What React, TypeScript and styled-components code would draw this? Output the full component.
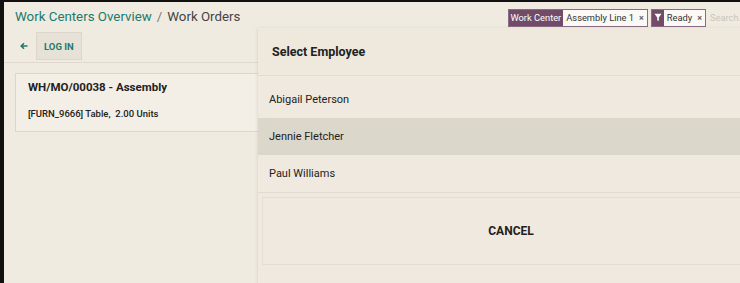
import React from "react";
import styled, { createGlobalStyle } from "styled-components";

const Global = createGlobalStyle`
  html, body { margin: 0; padding: 0; background: #111; }
  body { font-family: Roboto, "Liberation Sans", Arial, sans-serif; }
  * { box-sizing: border-box; }
`;

const Screen = styled.div`
  position: relative;
  width: 740px;
  height: 283px;
  overflow: hidden;
  background: #111;
  padding: 2px 0 0 4px;
`;

const Page = styled.div`
  position: relative;
  height: 100%;
  background: #f0ebe1;
  display: flex;
  flex-direction: column;
`;

const ControlPanel = styled.div`
  border-bottom: 1px solid #e0dace;
  height: 61px;
  display: flex;
  flex-direction: column;
`;

const TopRow = styled.div`
  display: flex;
  align-items: center;
  justify-content: space-between;
  height: 29px;
  padding: 0 0 0 11px;
`;

const Breadcrumb = styled.div`
  font-size: 13.3px;
  color: #444;
`;

const Crumb = styled.span`
  color: #217a6b;
`;

const Sep = styled.span`
  color: #777;
  margin: 0 5px;
`;

const SearchBar = styled.div`
  display: flex;
  align-items: center;
  gap: 3px;
  font-size: 9.3px;
  height: 18px;
  margin-top: 2px;
`;

const Facet = styled.div`
  display: flex;
  align-items: stretch;
  height: 18px;
  border: 1px solid #8a6d83;
  background: #fbf9f5;
`;

const FacetLabel = styled.span<{ $icon?: boolean }>`
  background: #714b67;
  color: #fff;
  display: flex;
  align-items: center;
  padding: ${(p) => (p.$icon ? "0 2px" : "0 2px 0 1px")};
`;

const FacetValue = styled.span`
  color: #333;
  display: flex;
  align-items: center;
  gap: 5px;
  padding: 0 3px 0 3px;
`;

const Close = styled.span`
  font-size: 9px;
  font-weight: 700;
  color: #666;
`;

const SearchInput = styled.span`
  color: #c9c4bb;
  margin-left: 1px;
  width: 30px;
  overflow: hidden;
  white-space: nowrap;
`;

const ButtonRow = styled.div`
  display: flex;
  align-items: center;
  gap: 8px;
  padding-left: 16px;
  height: 30px;
`;

const BackArrow = styled.span`
  display: flex;
  align-items: center;
`;

const LoginButton = styled.div`
  height: 28px;
  padding: 0 7px;
  display: flex;
  align-items: center;
  background: #e7e2d8;
  border: 1px solid #dcd6ca;
  color: #217a6b;
  font-size: 9.5px;
  font-weight: 700;
`;

const Content = styled.div`
  padding: 10px 0 0 11px;
`;

const Card = styled.div`
  width: 300px;
  height: 59px;
  border: 1px solid #ddd7cb;
  background: #f3efe6;
  padding: 6px 12px;
  display: flex;
  flex-direction: column;
  gap: 14px;
  color: #222;
`;

const CardTitle = styled.div`
  font-size: 11.5px;
  font-weight: 700;
`;

const CardSub = styled.div`
  font-size: 9.5px;
  font-weight: 500;
`;

const Modal = styled.div`
  position: absolute;
  left: 254px;
  top: 26px;
  right: -20px;
  bottom: -20px;
  background: #efe9df;
  box-shadow: -1px 0 3px rgba(0, 0, 0, 0.08);
  display: flex;
  flex-direction: column;
`;

const ModalHeader = styled.div`
  height: 48px;
  display: flex;
  align-items: center;
  padding-left: 14px;
  font-size: 12.5px;
  font-weight: 700;
  color: #222;
  border-bottom: 1px solid #e2dcd0;
  background: #eee8dd;
`;

const List = styled.div`
  display: flex;
  flex-direction: column;
  padding-top: 5px;
  border-bottom: 1px solid #e2dcd0;
`;

const Row = styled.div<{ $active?: boolean }>`
  height: 37px;
  display: flex;
  align-items: center;
  padding-left: 11px;
  font-size: 11px;
  color: #222;
  background: ${(p) => (p.$active ? "#dcd7cb" : "transparent")};
`;

const Footer = styled.div`
  padding: 4px 0 0 4px;
`;

const CancelButton = styled.div`
  height: 68px;
  border: 1px solid #e3ddd2;
  background: #efe9df;
  display: flex;
  align-items: center;
  justify-content: center;
  font-size: 12px;
  font-weight: 700;
  color: #222;
`;

const FunnelIcon = () => (
  <svg width="8" height="9" viewBox="0 0 8 9">
    <path d="M0.5 0.8h7L4.8 4.4v3.6L3.2 7.2V4.4z" fill="#fff" />
  </svg>
);

const ArrowIcon = () => (
  <svg width="8" height="8" viewBox="0 0 8 8">
    <path
      d="M7.5 4H1.5M4 1.2L1.2 4 4 6.8"
      stroke="#217a6b"
      strokeWidth="1.6"
      fill="none"
    />
  </svg>
);

export default function App() {
  return (
    <>
      <Global />
      <Screen>
        <Page>
          <ControlPanel>
            <TopRow>
              <Breadcrumb>
                <Crumb>Work Centers Overview</Crumb>
                <Sep>/</Sep>
                Work Orders
              </Breadcrumb>
              <SearchBar>
                <Facet>
                  <FacetLabel>Work Center</FacetLabel>
                  <FacetValue>
                    Assembly Line 1 <Close>×</Close>
                  </FacetValue>
                </Facet>
                <Facet>
                  <FacetLabel $icon>
                    <FunnelIcon />
                  </FacetLabel>
                  <FacetValue>
                    Ready <Close>×</Close>
                  </FacetValue>
                </Facet>
                <SearchInput>Search...</SearchInput>
              </SearchBar>
            </TopRow>
            <ButtonRow>
              <BackArrow>
                <ArrowIcon />
              </BackArrow>
              <LoginButton>LOG IN</LoginButton>
            </ButtonRow>
          </ControlPanel>
          <Content>
            <Card>
              <CardTitle>WH/MO/00038 - Assembly</CardTitle>
              <CardSub>[FURN_9666] Table,&nbsp; 2.00 Units</CardSub>
            </Card>
          </Content>
          <Modal>
            <ModalHeader>Select Employee</ModalHeader>
            <List>
              <Row>Abigail Peterson</Row>
              <Row $active>Jennie Fletcher</Row>
              <Row>Paul Williams</Row>
            </List>
            <Footer>
              <CancelButton>CANCEL</CancelButton>
            </Footer>
          </Modal>
        </Page>
      </Screen>
    </>
  );
}
